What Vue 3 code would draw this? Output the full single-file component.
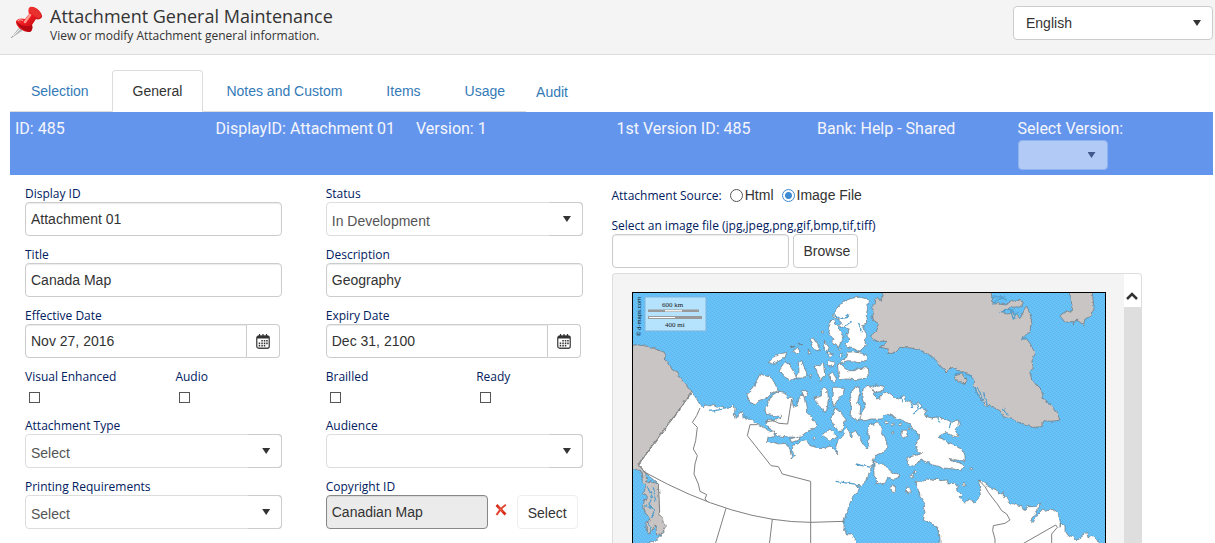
<script setup>
import { ref } from 'vue'

const tabs = ['Selection', 'General', 'Notes and Custom', 'Items', 'Usage']
const activeTab = ref('General')
const language = ref('English')
const source = ref('image')

const form = ref({
  displayId: 'Attachment 01',
  status: 'In Development',
  title: 'Canada Map',
  description: 'Geography',
  effective: 'Nov 27, 2016',
  expiry: 'Dec 31, 2100',
  type: 'Select',
  audience: '',
  printing: 'Select',
  copyright: 'Canadian Map',
  file: '',
})

const summary = [
  'ID: 485',
  'DisplayID: Attachment 01',
  'Version: 1',
  '1st Version ID: 485',
  'Bank: Help - Shared',
]

const rows = [
  [
    { id: 'displayId', label: 'Display ID', kind: 'text' },
    { id: 'status', label: 'Status', kind: 'select', options: ['In Development', 'Approved'] },
  ],
  [
    { id: 'title', label: 'Title', kind: 'text' },
    { id: 'description', label: 'Description', kind: 'text' },
  ],
  [
    { id: 'effective', label: 'Effective Date', kind: 'date' },
    { id: 'expiry', label: 'Expiry Date', kind: 'date' },
  ],
  [
    { id: 'flagsA', kind: 'checks', items: ['Visual Enhanced', 'Audio'] },
    { id: 'flagsB', kind: 'checks', items: ['Brailled', 'Ready'] },
  ],
  [
    { id: 'type', label: 'Attachment Type', kind: 'select', options: ['Select'] },
    { id: 'audience', label: 'Audience', kind: 'select', options: [''] },
  ],
  [
    { id: 'printing', label: 'Printing Requirements', kind: 'select', options: ['Select'] },
    { id: 'copyright', label: 'Copyright ID', kind: 'lookup' },
  ],
]
</script>

<template>
  <div class="page">
    <header class="top">
      <svg class="pin" viewBox="0 0 34 34" aria-hidden="true">
        <defs>
          <linearGradient id="pinRed" x1="0" y1="0" x2="1" y2="1">
            <stop offset="0" stop-color="#ff6a60" />
            <stop offset=".45" stop-color="#ee1c22" />
            <stop offset="1" stop-color="#a30008" />
          </linearGradient>
        </defs>
        <path d="M11 21L1 33L14 24Z" fill="#b9bdc0" stroke="#8f9396" stroke-width=".5" />
        <path d="M3 31L12 22" stroke="#f5f5f5" stroke-width="1" />
        <path d="M6 16C8 13 12 13 15 14L19 9C18 6 18 3 20 2C24 0 33 7 32 12C31 14 28 15 26 14L22 20C23 23 22 26 20 27C15 28 5 22 6 16Z" fill="url(#pinRed)" />
        <path d="M6 16C7 21 14 26 20 27C22 25 23 23 22 20C16 23 10 20 6 16Z" fill="#b80811" />
        <ellipse cx="25.500" cy="7.500" rx="7" ry="3.500" transform="rotate(44 25.500 7.500)" fill="#e8302f" />
        <path d="M15 17L20 10" stroke="#ff9a90" stroke-width="2.500" stroke-linecap="round" />
        <path d="M8 16C9 14.500 11 14.500 13 15.500" fill="none" stroke="#ffb0a8" stroke-width="1" />
      </svg>
      <div class="heading">
        <h1>Attachment General Maintenance</h1>
        <p>View or modify Attachment general information.</p>
      </div>
      <span class="pick pick-lang">
        <select v-model="language" aria-label="Language"><option>English</option></select>
      </span>
    </header>

    <nav class="tabs">
      <div class="tab-group">
        <a
          v-for="t in tabs"
          :key="t"
          href="#"
          class="tab"
          :class="{ active: t === activeTab }"
          @click.prevent="activeTab = t"
        >{{ t }}</a>
      </div>
      <a href="#" class="audit" @click.prevent>Audit</a>
    </nav>

    <section class="summary">
      <div v-for="s in summary" :key="s">{{ s }}</div>
      <div class="version">
        <label for="version">Select Version:</label>
        <span class="pick pick-version"><select id="version" disabled><option></option></select></span>
      </div>
    </section>

    <main class="content">
      <form class="fields" @submit.prevent>
        <template v-for="(row, r) in rows" :key="r">
          <div v-for="f in row" :key="f.id" class="field">
            <div v-if="f.kind === 'checks'" class="checks">
              <div v-for="c in f.items" :key="c">
                <label :for="c">{{ c }}</label>
                <input :id="c" type="checkbox" class="check" />
              </div>
            </div>
            <template v-else>
              <label :for="f.id">{{ f.label }}</label>
              <input v-if="f.kind === 'text'" :id="f.id" v-model="form[f.id]" type="text" class="box" />
              <span v-else-if="f.kind === 'select'" class="pick pick-form">
                <select :id="f.id" v-model="form[f.id]">
                  <option v-for="o in f.options" :key="o">{{ o }}</option>
                </select>
              </span>
              <div v-else-if="f.kind === 'date'" class="date">
                <input :id="f.id" v-model="form[f.id]" type="text" class="box" />
                <button type="button" :aria-label="'Choose ' + f.label">
                  <svg viewBox="0 0 14 15" aria-hidden="true">
                    <rect x=".75" y="2" width="12.5" height="12.25" rx="2" fill="none" stroke="#444" stroke-width="1.300" />
                    <path d="M1 2H13V4.500H1Z" fill="#333" />
                    <path d="M3.500 0V3M10.500 0V3M7 0V3" stroke="#333" stroke-width="1.200" />
                    <path d="M5.300 6h1.500v1.600H5.300zM7.800 6h1.500v1.600H7.800zM10.200 6h1.500v1.600h-1.500zM2.700 8.600h1.500v1.600H2.700zM5.300 8.600h1.500v1.600H5.300zM7.800 8.600h1.500v1.600H7.800zM10.200 8.600h1.500v1.600h-1.500zM2.700 11h1.500v1.600H2.700zM5.300 11h1.500v1.600H5.300zM7.800 11h1.500v1.600H7.800z" fill="#333" />
                  </svg>
                </button>
              </div>
              <div v-else class="lookup">
                <input :id="f.id" :value="form[f.id]" type="text" class="box" readonly />
                <button type="button" class="clear" aria-label="Clear copyright">
                  <svg viewBox="0 0 12 12" aria-hidden="true">
                    <path d="M1.500 1L10.500 10.500" stroke="#d62a18" stroke-width="2.600" />
                    <path d="M10.800 .8C7 3.500 4 7 1.500 11" fill="none" stroke="#e2452f" stroke-width="2" />
                    <path d="M3 2.500L8 8" stroke="#ff7a5c" stroke-width=".7" />
                  </svg>
                </button>
                <button type="button" class="btn btn-light">Select</button>
              </div>
            </template>
          </div>
        </template>
      </form>

      <section class="media">
        <div class="source" role="radiogroup" aria-labelledby="srcLabel">
          <span id="srcLabel">Attachment Source:</span>
          <input id="srcHtml" v-model="source" type="radio" value="html" name="src" />
          <label for="srcHtml">Html</label>
          <input id="srcImage" v-model="source" type="radio" value="image" name="src" />
          <label for="srcImage">Image File</label>
        </div>
        <label for="file">Select an image file (jpg,jpeg,png,gif,bmp,tif,tiff)</label>
        <div class="upload">
          <input id="file" v-model="form.file" type="text" class="box" />
          <button type="button" class="btn">Browse</button>
        </div>
        <div class="viewer">
          <div class="canvas">
            <svg class="map" viewBox="633 294 472 280" role="img" aria-label="Map of Canada">
              <defs>
                <pattern id="sea" width="4" height="4" patternUnits="userSpaceOnUse">
                  <rect width="4" height="4" fill="#63c5f8" />
                  <path d="M0 0h1v1H0zM2 1h1v1H2zM1 2h1v1H1zM3 3h1v1H3z" fill="#68b2e8" />
                  <path d="M1 0h1v1H1zM3 2h1v1H3z" fill="#66bcff" />
                </pattern>
                <pattern id="land" width="4" height="4" patternUnits="userSpaceOnUse">
                  <rect width="4" height="4" fill="#cbc8c8" />
                  <path d="M0 0h1v1H0zM2 2h1v1H2z" fill="#b8b4b4" />
                  <path d="M2 0h1v1H2zM0 2h1v1H0z" fill="#d4c6c6" />
                </pattern>
                <filter id="coast" filterUnits="userSpaceOnUse" x="625" y="285" width="490" height="300">
                  <feTurbulence type="fractalNoise" baseFrequency=".22" numOctaves="2" seed="4" result="n" />
                  <feDisplacementMap in="SourceGraphic" in2="n" scale="4" xChannelSelector="R" yChannelSelector="G" />
                </filter>
              </defs>
              <rect x="625" y="285" width="490" height="300" fill="url(#sea)" />

              <g filter="url(#coast)" class="shore">
                <g transform="translate(625 285) scale(.33333)">
                  <path d="M60 870V780L85 775 95 765 110 750 118 745 105 700 100 600 62 567 40 542 200 325 212 340 225 362 235 372 240 362 255 366 268 360 275 370 290 366 300 374 315 372 325 362 330 372 328 390 335 403 345 385 355 388 358 402 375 403 390 418 405 424 420 432 430 440 445 445 450 458 430 460 425 472 445 475 460 480 480 478 490 485 495 500 502 525 508 515 500 500 505 485 515 480 530 472 545 470 555 485 575 490 600 492 615 486 638 508 632 490 640 465 655 455 655 440 665 430 672 445 680 462 683 445 692 440 700 455 710 475 727 498 732 470 728 440 732 425 745 420 758 418 772 430 770 450 785 470 785 495 770 508 750 515 745 530 740 550 730 575 725 590 710 605 695 605 703 613 695 627 680 645 670 670 663 690 657 710 657 735 665 750 680 750 690 765 700 790V870Z" />
                  <path d="M405 270L430 278 445 290 460 320 435 330 420 345 400 350 390 362 375 355 365 330 385 312 395 290Z" />
                  <path d="M420 375L430 355 440 335 460 322 480 325 485 340 500 340 505 370 515 365 525 335 535 330 542 360 545 385 560 400 575 425 570 435 550 440 530 455 510 460 480 458 455 455 445 445 435 430 420 422 425 410 455 408 470 398 450 395 425 390Z" />
                  <path d="M600 310L608 320 610 345 605 380 595 385 585 365 570 350 568 345 590 335 588 318Z" />
                  <path d="M622 310L658 310 655 330 640 345 627 366 620 350 625 330Z" />
                  <path d="M630 372L650 385 660 410 655 430 645 445 635 430 622 420 620 400Z" />
                  <path d="M615 435L634 455 630 465 612 468 592 455Z" />
                  <path d="M430 235L450 218 470 208 485 205 480 222 460 232 445 240Z" />
                  <path d="M468 250L480 233 495 245 505 262 515 280 500 290 480 280 463 262Z" />
                  <path d="M520 235L530 230 540 255 547 275 530 282 510 282 522 262Z" />
                  <path d="M567 248L595 238 599 270 587 292 577 265Z" />
                  <path d="M555 165L565 160 570 175 585 185 582 202 565 195Z" />
                  <path d="M598 172L612 190 608 202 600 195Z" />
                  <path d="M610 228L627 235 625 248 610 243ZM612 272L622 265 635 285 628 293 614 285ZM495 465L520 458 525 466 500 475ZM505 200L518 192 525 202 515 210ZM530 320L545 320 548 332 538 340ZM550 195L558 208 550 210ZM605 205L625 210 615 218ZM495 188L510 184ZM518 182L530 178Z" />
                </g>
                <g transform="translate(760 290) scale(.33333)">
                  <path d="M220 75L240 50 255 35 275 28 300 24 320 30 325 35 322 60 318 85 320 105 308 110 315 130 320 140 315 160 318 170 305 180 298 190 285 180 260 175 255 165 270 150 258 140 268 120 250 115 235 112 245 102 235 92 220 85Z" />
                  <path d="M245 215L260 205 265 190 280 188 300 192 320 198 320 212 300 222 280 216 262 215 245 222Z" />
                  <path d="M232 225L245 222 250 235 265 245 285 245 300 235 325 238 327 255 318 268 290 272 265 270 240 272 235 250Z" />
                  <path d="M210 95L220 92 235 112 240 125 252 142 245 155 235 175 228 165 218 162 222 150 210 140 205 120 210 110Z" />
                  <path d="M297 292L280 300 270 325 273 355 270 380 290 395 312 390 317 382 300 375 302 355 293 340 300 310Z" />
                  <path d="M342 515L355 525 370 522 385 540 400 553 418 555 418 565 400 570 385 565 370 588 358 580 348 585 350 570 342 560Z" />
                  <ellipse cx="400" cy="599" rx="7" ry="11" />
                  <ellipse cx="445" cy="602" rx="6" ry="10" />
                  <ellipse cx="432" cy="435" rx="9" ry="12" />
                  <circle cx="455" cy="562" r="5" /><circle cx="464" cy="552" r="4" />
                  <circle cx="187" cy="129" r="3" /><circle cx="378" cy="400" r="4" />
                  <circle cx="398" cy="406" r="3" /><circle cx="398" cy="432" r="3" />
                  <circle cx="447" cy="418" r="4" /><circle cx="420" cy="406" r="4" />
                  <circle cx="242" cy="198" r="4" /><circle cx="240" cy="182" r="3" />
                  <circle cx="152" cy="262" r="3" /><circle cx="163" cy="448" r="3" />
                </g>
                <g transform="translate(860 265) scale(.33333)">
                  <path d="M10 373L25 363 38 370 48 405 62 402 70 388 82 383 95 392 100 397 115 405 130 397 140 412 155 410 160 425 175 415 185 430 200 440 190 455 215 462 235 458 262 468 275 475 295 468 298 485 285 495 298 520 275 515 260 505 245 512 232 520 250 525 270 540 290 548 305 556 315 572 315 590 300 590 265 583 285 593 310 600 317 610 300 617 250 612 220 603 200 595 180 585 170 600 150 608 140 600 142 580 160 575 185 570 170 555 165 545 175 530 175 510 165 505 150 480 130 470 110 462 90 452 75 450 65 465 35 465 15 470 0 465 5 445 15 430 6 400Z" />
                  <path d="M32 368L48 362 72 372 60 383 45 385Z" />
                  <path d="M165 655L185 655 200 645 215 648 230 642 240 650 262 648 265 660 285 658 295 665 290 680 305 690 300 700 315 718 325 708 345 715 358 700 362 680 355 648 370 655 385 665 395 672 410 678 415 690 430 685 430 700 442 700 445 715 465 722 485 725 490 738 505 728 520 728 542 718 532 740 520 760 512 770 520 775 530 755 548 735 560 742 575 735 590 745 600 765 600 790 604 776 615 785 615 800 625 815 640 818 650 830 665 815 680 805 685 825 695 815 710 825 720 850V940H240V820L235 795 215 780 190 765 195 745 190 730 195 715 180 695 175 675Z" />
                  <circle cx="312" cy="663" r="4" /><circle cx="334" cy="614" r="3" />
                  <g class="foreign">
                    <path d="M60 70L70 93 60 110 50 98 45 118 35 130 42 145 35 165 58 180 50 200 32 215 45 232 80 232 75 240 60 250 85 255 82 268 100 268 120 250 155 252 190 262 205 272 230 290 240 305 255 318 258 328 270 310 290 318 325 328 345 350 340 365 350 385 375 425 390 425 420 440 430 458 460 468 490 482 520 490 545 488 552 470 575 472 600 468 590 445 575 425 550 405 545 380 530 365 515 345 508 320 520 310 515 290 525 270 515 245 500 225 485 225 510 200 515 165 500 125 480 165 465 145 440 150 425 142 455 130 485 128 490 113 465 108 440 120 425 118 400 120 390 70Z" />
                    <path d="M633 70L630 105 637 125 633 145 620 140 600 155 615 175 640 172 640 185 650 168 670 182 675 165 695 155 702 130 695 70Z" />
                    <path d="M285 335L305 330 322 350 312 360 295 355Z" />
                  </g>
                </g>
                <g class="foreign" transform="translate(625 285) scale(.33333)">
                  <path d="M0 188L35 182 50 185 62 183 75 192 90 193 105 200 118 205 122 215 118 225 128 232 135 245 142 258 155 262 160 275 172 290 185 300 200 325 40 542 62 565 65 590 100 600 104 690 122 728 110 748 95 755 92 720 75 750 65 745 62 715 78 708 60 685 55 660 65 640 55 625 65 605 52 590 48 560 10 550Z" />
                  <path class="inlet" d="M68 610L82 640 72 660 88 680 80 700M85 610L92 650M60 665L82 672M70 715L78 740" />
                </g>
                <g class="inlet" transform="translate(860 265) scale(.33333)">
                  <path d="M392 100L420 98 440 110M397 122L410 108 436 100M418 147L440 138 462 142 468 165M452 142L460 165 476 142M345 370L355 395M355 370L368 410M370 385L382 425M430 432L445 455M282 330L310 325 340 342M485 225L500 222" />
                  <path d="M120 398L130 412M150 410L158 432M170 418L175 440M185 430L160 450M230 460L240 478M272 475L268 495" />
                </g>
                <path class="inlet" transform="translate(625 285) scale(.33333)" d="M692 540L738 550M632 592L702 602M255 382L305 374M628 95L645 105 665 100 672 90M660 125L680 112M700 115L712 145" />
              </g>

              <g class="borders" transform="translate(625 285) scale(.33333)">
                <path d="M200 327L40 542 60 565Q330 715 558 715L657 712" />
                <path d="M303 673L250 850M442 705L425 850M557 592V850" />
                <path d="M398 422H375L367 455 438 545 460 548 472 570 557 592" />
                <path d="M225 372L215 395 202 415 217 430 212 470 205 495 217 515 210 540 207 570 220 600 225 622 245 632 240 645 250 655" />
                <path d="M420 414L445 410 462 418 488 420 500 345" />
              </g>
              <g class="borders" transform="translate(860 265) scale(.33333)">
                <path d="M358 650L375 668 385 685 400 705 412 720 425 740 440 750 450 768 435 778 400 785 398 800 405 825V860" />
                <path d="M470 850L587 783 592 790 575 810V860" />
              </g>

              <rect x="645" y="298" width="61" height="34" fill="#b5e2fd" stroke="#7fb5dd" />
              <text class="scale" x="662" y="308">600 km</text>
              <text class="scale" x="665" y="328">400 mi</text>
              <path d="M648 310.500H699V313H648Z" fill="#999" /><path d="M665 311H682V312.500H665Z" fill="#eee" />
              <path d="M648 317H702V320H648Z" fill="#999" /><path d="M649 318H675V319H649Z" fill="#fff" />
              <text class="credit" transform="translate(641 337) rotate(-90)">© d-maps.com</text>
            </svg>
          </div>
          <div class="scrollbar">
            <button type="button" aria-label="Scroll up">
              <svg viewBox="0 0 12 8" aria-hidden="true"><path d="M1 7L6 2L11 7" fill="none" stroke="#333" stroke-width="2.500" /></svg>
            </button>
          </div>
        </div>
      </section>
    </main>
  </div>
</template>

<style>
body {
  margin: 0;
  background: #fff;
}
</style>

<style scoped>
.page {
  height: 100vh;
  overflow: hidden;
  display: flex;
  flex-direction: column;
  box-sizing: border-box;
  font-family: "Liberation Sans", Arial, sans-serif;
  font-size: 14px;
  color: #333;
}
.page *,
.page *::before,
.page *::after {
  box-sizing: border-box;
}
input,
select,
button {
  font: inherit;
  color: inherit;
  margin: 0;
}
select {
  appearance: none;
  width: 100%;
  height: 100%;
  border: 0;
  background: transparent;
  outline: 0;
}
.top {
  flex: none;
  display: flex;
  align-items: flex-start;
  height: 55px;
  padding: 5px 2px 0 10px;
  background: #f4f4f4;
  border-bottom: 1px solid #ddd;
}
.pin {
  width: 34px;
  height: 34px;
}
.heading {
  flex: 1;
  padding-left: 6px;
  font-family: "Open Sans", sans-serif;
}
h1 {
  margin: 0;
  font-size: 18px;
  font-weight: 400;
  line-height: 23px;
}
.heading p {
  margin: 0;
  font-size: 12px;
  line-height: 16px;
}
.pick {
  position: relative;
  display: block;
  height: 34px;
  border: 1px solid #ccc;
  border-radius: 4px;
  background: #fff;
}
.pick::after {
  content: "";
  position: absolute;
  right: 11px;
  top: 13px;
  width: 8px;
  height: 6px;
  background: #333;
  clip-path: polygon(0 0, 100% 0, 50% 100%);
  pointer-events: none;
}
.pick-lang {
  width: 200px;
  margin-top: 1px;
}
.pick-lang select {
  padding: 0 12px;
}
.tabs {
  flex: none;
  display: flex;
  margin: 15px 2px 0 10px;
}
.tab-group {
  display: flex;
  border-bottom: 1px solid #ddd;
}
.tab {
  height: 42px;
  margin-bottom: -1px;
  margin-right: 2px;
  padding: 0 20px;
  border: 1px solid transparent;
  border-radius: 4px 4px 0 0;
  line-height: 40px;
  color: #337ab7;
  text-decoration: none;
}
.tab:last-child {
  margin-right: 0;
}
.tab.active {
  color: #333;
  background: #fff;
  border-color: #ddd #ddd #fff;
}
.audit {
  padding-left: 10px;
  line-height: 44px;
  height: 42px;
  color: #337ab7;
  text-decoration: none;
}
.summary {
  flex: none;
  display: grid;
  grid-template-columns: repeat(6, 1fr);
  height: 63px;
  margin: 0 2px 0 10px;
  padding-top: 6px;
  background: #6495ed;
  color: #f4f6fb;
  font-family: Roboto, sans-serif;
  font-size: 16px;
  line-height: 22px;
}
.summary > div {
  padding-left: 5px;
}
.version label {
  display: block;
}
.pick-version {
  width: 90px;
  height: 30px;
  border-color: #8fb1ee;
  background: #b1caf6;
}
.pick-version::after {
  top: 11px;
  background: #40598c;
}
.content {
  flex: 1;
  min-height: 0;
  display: grid;
  grid-template-columns: 1fr 1fr;
  grid-template-rows: minmax(0, 1fr);
  margin: 0 2px 0 10px;
  padding-top: 10px;
}
.fields {
  display: grid;
  grid-template-columns: 1fr 1fr;
  align-content: start;
  row-gap: 10px;
}
.field {
  padding-left: 15px;
}
.field label,
.media > label {
  display: block;
  font-family: "Open Sans", sans-serif;
  font-size: 12px;
  line-height: 17px;
  color: #002060;
  white-space: nowrap;
}
.box {
  width: 100%;
  height: 34px;
  padding: 0 5px;
  border: 1px solid #ccc;
  border-radius: 4px;
  background: #fff;
  box-shadow: inset 0 1px 1px rgba(0, 0, 0, 0.08);
  outline: 0;
  display: block;
}
.field > .box,
.pick-form {
  width: 90%;
}
.pick-form {
  border-color: #ddd;
}
.pick-form::before {
  content: "";
  position: absolute;
  right: -1px;
  top: -1px;
  width: 34px;
  height: 34px;
  border: 1px solid #ccc;
  border-left: 0;
  border-radius: 0 4px 4px 0;
  pointer-events: none;
}
.pick-form select {
  padding: 4px 5px 0;
  color: #555;
}
.date {
  display: flex;
  width: 90%;
  padding-right: 2px;
}
.date .box {
  flex: 1;
  min-width: 0;
  border-radius: 4px 0 0 4px;
}
.date button {
  width: 33px;
  height: 34px;
  padding: 0;
  border: 1px solid #ccc;
  border-left: 0;
  border-radius: 0 4px 4px 0;
  background: #fff;
  display: grid;
  place-items: center;
}
.date svg {
  width: 14px;
  height: 15px;
}
.checks {
  display: flex;
  margin-left: -15px;
  height: 39px;
}
.checks > div {
  flex: 1;
  padding-left: 15px;
}
.check {
  appearance: none;
  display: block;
  width: 11px;
  height: 11px;
  margin: 7px 0 0 4px;
  border: 1px solid #555;
  background: #fff;
}
.lookup {
  display: flex;
}
.lookup .box {
  width: 162px;
  background: #ebebeb;
  border-color: #888;
}
.clear {
  width: 12px;
  height: 12px;
  margin: 9px 10px 0 7px;
  padding: 0;
  border: 0;
  background: none;
}
.clear svg {
  display: block;
  width: 12px;
  height: 12px;
}
.btn {
  height: 34px;
  padding: 0 7px 0 10px;
  border: 1px solid #ccc;
  border-radius: 4px;
  background: #fff;
}
.btn-light {
  padding: 2px 10px 0;
  border-color: #eee;
}
.media {
  display: flex;
  flex-direction: column;
  min-width: 0;
}
.source {
  display: flex;
  align-items: center;
  height: 21px;
  margin-bottom: 11px;
}
.source span {
  margin-right: 8px;
  font-family: "Open Sans", sans-serif;
  font-size: 12px;
  color: #002060;
}
.source input {
  appearance: none;
  width: 13px;
  height: 13px;
  margin-right: 2px;
  border: 1px solid #555;
  border-radius: 50%;
}
.source input:checked {
  border-color: #3c8ad2;
  background: radial-gradient(circle, #3c8ad2 0 3px, #fff 4px);
}
.source label {
  margin-right: 8px;
  padding-bottom: 1px;
}
.upload {
  display: flex;
  gap: 4px;
  margin-bottom: 5px;
}
.upload .box {
  width: 177px;
}
.viewer {
  flex: 1;
  min-height: 0;
  width: 100%;
  max-width: 530px;
  display: flex;
  overflow: hidden;
  border: 1px solid #ddd;
  border-bottom: 0;
  border-radius: 4px 4px 0 0;
  background: #f4f4f4;
}
.canvas {
  flex: 1;
  padding: 18px 18px 0 19px;
}
.map {
  display: block;
  width: 100%;
  border: 1px solid #000;
}
.scrollbar {
  width: 17px;
  background: #dedede;
}
.scrollbar button {
  display: grid;
  place-items: center;
  width: 17px;
  height: 33px;
  padding: 10px 0 0;
  border: 0;
  background: #fff;
}
.scrollbar svg {
  width: 12px;
  height: 8px;
}
.shore path,
.shore ellipse,
.shore circle {
  fill: #fff;
  stroke: #707070;
  stroke-width: 2px;
}
.shore .foreign path {
  fill: url(#land);
}
.shore .inlet path,
.shore path.inlet,
.shore .foreign path.inlet {
  fill: none;
  stroke: #559fca;
  stroke-width: 4px;
}
.borders path {
  fill: none;
  stroke: #808080;
  stroke-width: 3px;
}
.scale {
  font-family: "Liberation Serif", serif;
  font-size: 7px;
  fill: #222;
}
.credit {
  font-size: 6px;
  fill: #111;
}
</style>
